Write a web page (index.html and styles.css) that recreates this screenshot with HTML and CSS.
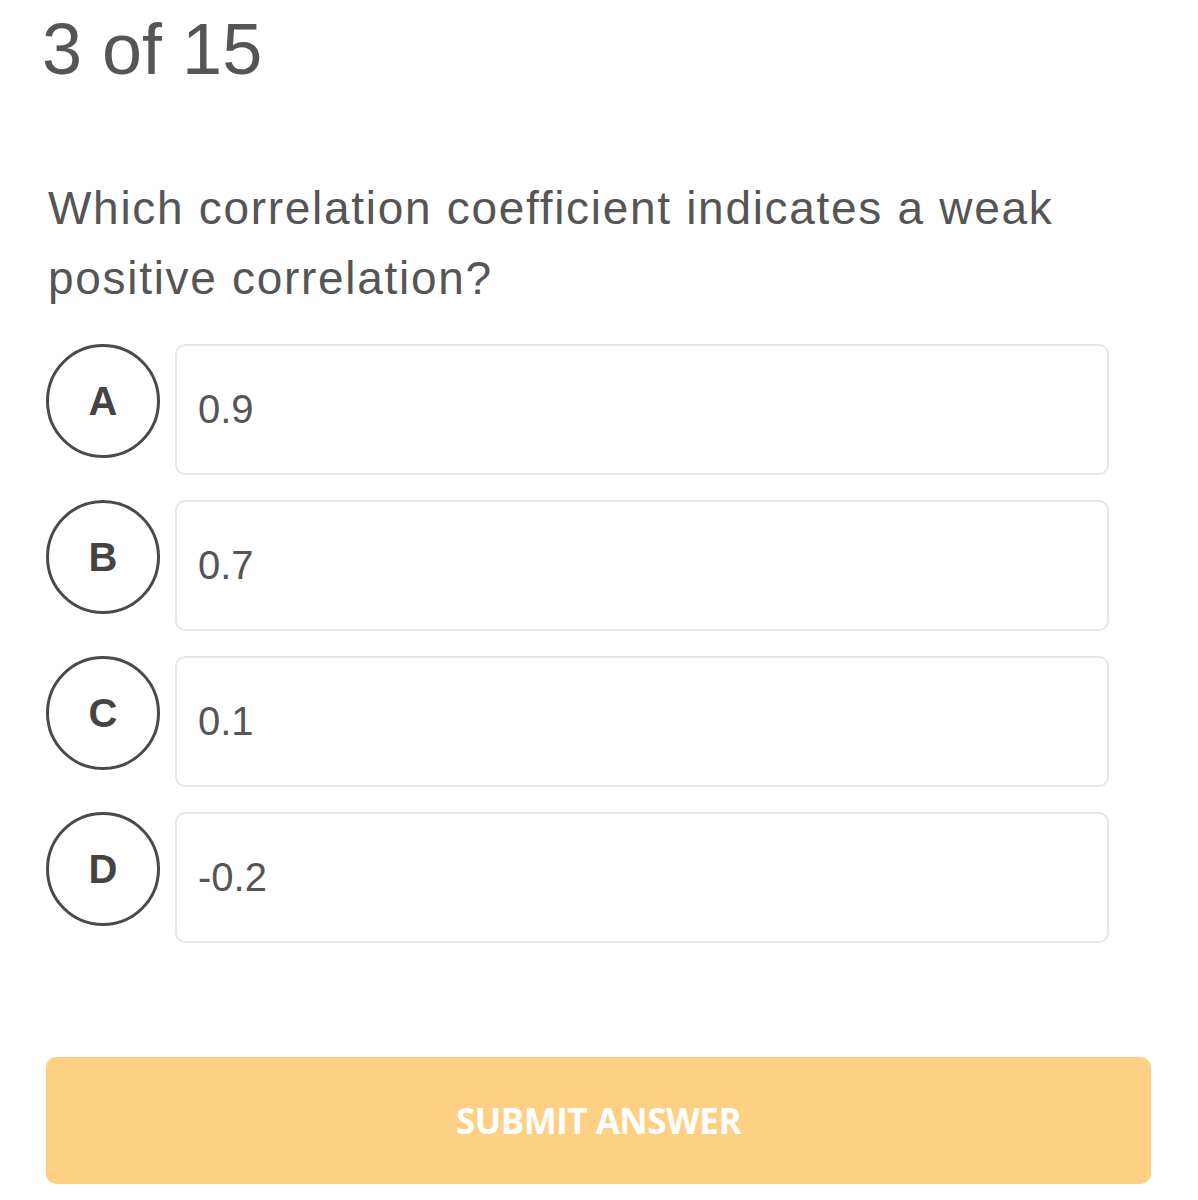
FILE: index.html
```html
<!DOCTYPE html>
<html lang="en">
<head>
    <meta charset="UTF-8">
    <meta name="viewport" content="width=device-width, initial-scale=1.0">
    <title>Quiz</title>
    <link rel="stylesheet" href="styles.css">
</head>
<body>
    <div class="quiz">
        <div class="progress">3 of 15</div>

        <p class="question">Which correlation coefficient indicates a weak positive correlation?</p>

        <div class="options">
            <div class="option">
                <div class="letter">A</div>
                <div class="answer">0.9</div>
            </div>
            <div class="option">
                <div class="letter">B</div>
                <div class="answer">0.7</div>
            </div>
            <div class="option">
                <div class="letter">C</div>
                <div class="answer">0.1</div>
            </div>
            <div class="option">
                <div class="letter">D</div>
                <div class="answer">-0.2</div>
            </div>
        </div>

        <button class="submit" disabled>SUBMIT ANSWER</button>
    </div>
</body>
</html>
```

FILE: styles.css
```css
body {
    margin: 0;
    padding: 0;
    background: #fff;
    font-family: "Liberation Sans", Arial, sans-serif;
    color: #555;
}

.quiz {
    padding: 13px 47px 0 46px;
}

.progress {
    font-size: 72px;
    line-height: 1;
    margin-left: -4px;
}

.question {
    font-size: 46px;
    line-height: 70px;
    letter-spacing: 1.7px;
    margin: 88px 0 0 2px;
    max-width: 1040px;
}

.options {
    display: flex;
    flex-direction: column;
    gap: 25px;
    margin-top: 31px;
    margin-right: 42px;
}

.option {
    display: flex;
    align-items: flex-start;
    gap: 15px;
}

.letter {
    flex: none;
    width: 114px;
    height: 114px;
    box-sizing: border-box;
    border: 3px solid #4a4a4a;
    border-radius: 50%;
    display: flex;
    align-items: center;
    justify-content: center;
    font-size: 40px;
    font-weight: bold;
    color: #444;
}

.answer {
    flex: 1;
    height: 131px;
    box-sizing: border-box;
    border: 2px solid #e1e8f0;
    border-radius: 10px;
    display: flex;
    align-items: center;
    padding-left: 21px;
    font-size: 40px;
}

.submit {
    display: block;
    width: 100%;
    height: 127px;
    margin-top: 114px;
    border: none;
    border-radius: 10px;
    background: #fdd083;
    color: #fff;
    font-family: "Open Sans", sans-serif;
    font-weight: bold;
    font-size: 35px;
    letter-spacing: -0.5px;
}
```
